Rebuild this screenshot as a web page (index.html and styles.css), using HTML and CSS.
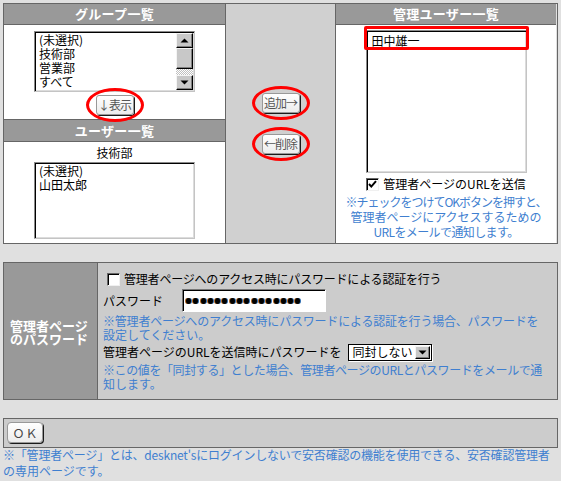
FILE: index.html
```html
<!DOCTYPE html>
<html lang="ja">
<head>
<meta charset="utf-8">
<title>管理ユーザー設定</title>
<link rel="stylesheet" href="styles.css">
</head>
<body>
<div class="top">
  <div class="col-left">
    <div class="hdr">グループ一覧</div>
    <div class="pane group-pane">
      <div class="listbox group-list">
        <div class="items">
          <div>(未選択)</div>
          <div>技術部</div>
          <div>営業部</div>
          <div>すべて</div>
        </div>
        <div class="scrollbar">
          <div class="sb-btn"><svg width="9" height="5" viewBox="0 0 9 5"><polygon points="0.5,4.5 4.5,0.5 8.5,4.5" fill="#000"/></svg></div>
          <div class="sb-thumb"></div>
          <div class="sb-track"></div>
          <div class="sb-btn"><svg width="9" height="5" viewBox="0 0 9 5"><polygon points="0.5,0.5 4.5,4.5 8.5,0.5" fill="#000"/></svg></div>
        </div>
      </div>
      <div class="btn-wrap"><span class="btn">↓表示</span><span class="ring"></span></div>
    </div>
    <div class="hdr hdr2">ユーザー一覧</div>
    <div class="pane user-pane">
      <div class="dept">技術部</div>
      <div class="listbox user-list">
        <div class="items">
          <div>(未選択)</div>
          <div>山田太郎</div>
        </div>
      </div>
    </div>
  </div>
  <div class="col-mid">
    <div class="btn-wrap"><span class="btn">追加→</span><span class="ring"></span></div>
    <div class="btn-wrap"><span class="btn">←削除</span><span class="ring"></span></div>
  </div>
  <div class="col-right">
    <div class="hdr">管理ユーザー一覧</div>
    <div class="pane admin-pane">
      <div class="listbox admin-list">
        <div class="items">
          <div>田中雄一</div>
        </div>
        <span class="rect"></span>
      </div>
      <div class="chk-row"><span class="chk"><svg width="11" height="11" viewBox="0 0 11 11"><path d="M2 5 L4.3 7.6 L9 2.2" fill="none" stroke="#000" stroke-width="2"/></svg></span><span>管理者ページのURLを送信</span></div>
      <div class="note center">
        <div class="ls-a">※チェックをつけてOKボタンを押すと、</div>
        <div>管理者ページにアクセスするための</div>
        <div class="ls-b">URLをメールで通知します。</div>
      </div>
    </div>
  </div>
</div>

<div class="pw">
  <div class="pw-label">管理者ページ<br>のパスワード</div>
  <div class="pw-body">
    <div class="row1"><span class="chk"></span><span class="ls-c">管理者ページへのアクセス時にパスワードによる認証を行う</span></div>
    <div class="row2"><span class="pw-name">パスワード</span><span class="pw-input"><i></i><i></i><i></i><i></i><i></i><i></i><i></i><i></i><i></i><i></i><i></i><i></i><i></i><i></i><i></i><i></i></span></div>
    <div class="note note-pw">
      <div class="ls-c">※管理者ページへのアクセス時にパスワードによる認証を行う場合、パスワードを</div>
      <div>設定してください。</div>
    </div>
    <div class="row5"><span>管理者ページのURLを送信時にパスワードを</span><span class="select"><span class="sel-text">同封しない</span><span class="sel-btn"><svg width="9" height="5" viewBox="0 0 9 5"><polygon points="0.5,0.5 4.5,4.5 8.5,0.5" fill="#000"/></svg></span></span></div>
    <div class="note note-pw">
      <div class="ls-d">※この値を「同封する」とした場合、管理者ページのURLとパスワードをメールで通</div>
      <div>知します。</div>
    </div>
  </div>
</div>

<div class="okbar"><span class="btn okbtn">ＯＫ</span></div>
<div class="foot">
  <div class="ls-e">※「管理者ページ」とは、desknet'sにログインしないで安否確認の機能を使用できる、安否確認管理者</div>
  <div>の専用ページです。</div>
</div>
</body>
</html>
```

FILE: styles.css
```css
body {
  margin: 3px;
  background: #e0e0e0;
  font-family: "Noto Sans CJK JP", "Noto Sans", sans-serif;
  font-size: 12px;
  color: #000;
  line-height: 14px;
}

.top {
  display: flex;
  border: 1px solid #666;
  height: 239px;
}

.col-left {
  width: 221px;
  border-right: 1px solid #666;
  display: flex;
  flex-direction: column;
}

.col-mid {
  width: 110px;
  border-right: 1px solid #666;
  background: #d0d0d0;
  display: flex;
  flex-direction: column;
  align-items: center;
  padding-top: 89px;
  gap: 21px;
  box-sizing: border-box;
}

.col-right {
  width: 220px;
  display: flex;
  flex-direction: column;
}

.hdr {
  height: 20px;
  line-height: 20px;
  background: #999;
  color: #fff;
  font-weight: bold;
  font-size: 13px;
  text-align: center;
  border-bottom: 1px solid #666;
  letter-spacing: 0.3px;
}

.hdr2 {
  height: 21px;
  line-height: 21px;
  border-top: 1px solid #666;
}

.pane {
  background: #fff;
  display: flex;
  flex-direction: column;
  align-items: center;
}

.group-pane {
  height: 94px;
  padding-top: 6px;
  box-sizing: border-box;
  gap: 3px;
}

.user-pane {
  flex: 1;
  padding-top: 4px;
}

.admin-pane {
  flex: 1;
  padding-top: 5px;
}

.listbox {
  position: relative;
  width: 161px;
  box-sizing: border-box;
  background: #fff;
  border: 1px solid;
  border-color: #8a8a8a #c4c4c4 #c4c4c4 #8a8a8a;
  box-shadow: inset 1px 1px 0 #000, inset -1px -1px 0 #dcdcdc;
  padding: 1px;
  display: flex;
}

.items {
  flex: 1;
  padding-left: 3px;
  line-height: 14px;
  white-space: nowrap;
}

.group-list { height: 61px; }
.user-list { height: 77px; margin-top: 1px; }
.admin-list { height: 143px; }
.admin-list .items { padding-top: 2px; padding-left: 4px; }

.scrollbar {
  width: 17px;
  display: flex;
  flex-direction: column;
}

.sb-btn {
  height: 15px;
  box-sizing: border-box;
  background: #c8c8c8;
  border: 1px solid;
  border-color: #f4f4f4 #000 #000 #f4f4f4;
  box-shadow: inset -1px -1px 0 #808080;
  display: flex;
  align-items: center;
  justify-content: center;
}

.sb-thumb {
  height: 21px;
  box-sizing: border-box;
  background: #c8c8c8;
  border: 1px solid;
  border-color: #f4f4f4 #000 #000 #f4f4f4;
  box-shadow: inset -1px -1px 0 #808080;
}

.sb-track {
  flex: 1;
  background: repeating-conic-gradient(#fff 0 25%, #c0c0c0 0 50%) 0 0 / 2px 2px;
}

.dept {
  line-height: 14px;
  height: 15px;
}

.btn-wrap {
  position: relative;
  display: inline-flex;
}

.btn {
  display: inline-flex;
  align-items: center;
  justify-content: center;
  width: 38px;
  height: 20px;
  box-sizing: border-box;
  border: 1px solid #999;
  border-radius: 3px;
  background: linear-gradient(#ffffff, #ececec);
  box-shadow: 1px 1px 0 #1a1a1a;
  color: #555;
  font-size: 12px;
  letter-spacing: -1px;
  white-space: nowrap;
}

.ring {
  position: absolute;
  left: -10px;
  top: -7px;
  width: 58px;
  height: 34px;
  box-sizing: border-box;
  border: 3px solid #f00;
  border-radius: 50%;
}

.rect {
  position: absolute;
  left: -3px;
  right: -3px;
  top: -5px;
  height: 24px;
  box-sizing: border-box;
  border: 3px solid #f00;
  border-radius: 2px;
}

.chk-row {
  display: flex;
  align-items: center;
  height: 16px;
  margin-top: 3px;
  white-space: nowrap;
}

.chk {
  display: inline-flex;
  align-items: center;
  justify-content: center;
  width: 13px;
  height: 13px;
  box-sizing: border-box;
  background: #fff;
  border: 1px solid;
  border-color: #666 #f0f0f0 #f0f0f0 #666;
  box-shadow: inset 1px 1px 0 #000;
  margin-right: 4px;
  flex: none;
}

.note {
  color: #3f7fd0;
  white-space: nowrap;
}

.center {
  text-align: center;
  line-height: 15px;
  margin-top: 2px;
}

.ls-a { letter-spacing: -1px; }
.ls-b { letter-spacing: -0.6px; }
.ls-c { letter-spacing: -0.2px; }
.ls-d { letter-spacing: -0.4px; }
.ls-e { letter-spacing: -0.2px; }

.pw {
  margin-top: 18px;
  display: flex;
  border: 1px solid #666;
  height: 136px;
}

.pw-label {
  width: 94px;
  flex: none;
  background: #999;
  border-right: 1px solid #666;
  color: #fff;
  font-weight: bold;
  font-size: 13px;
  line-height: 13px;
  display: flex;
  align-items: center;
  padding-left: 6px;
  box-sizing: border-box;
  padding-top: 2px;
}

.pw-body {
  flex: 1;
  background: #ccc;
  padding: 8px 0 0 5px;
  white-space: nowrap;
}

.row1 {
  display: flex;
  align-items: center;
  height: 16px;
}

.row1 .chk { margin-left: 4px; }

.row2 {
  display: flex;
  align-items: center;
  height: 23px;
  margin-top: 2px;
}

.pw-name {
  width: 79px;
}

.pw-input {
  width: 144px;
  height: 23px;
  box-sizing: border-box;
  background: #fff;
  border: 1px solid;
  border-color: #777 #fff #fff #777;
  box-shadow: inset 1px 1px 0 #000;
  display: flex;
  align-items: center;
  padding-left: 3px;
  gap: 2.3px;
}

.pw-input i {
  width: 5px;
  height: 6px;
  border-radius: 50%;
  background: #000;
  box-shadow: -1px 0 0 #b0621c, 1px 0 0 #2c6cb0;
}

.note-pw {
  line-height: 14px;
  margin-top: 2px;
}

.row5 {
  display: flex;
  align-items: center;
  height: 18px;
  margin-top: 1px;
}

.select {
  margin-left: 6px;
  width: 84px;
  height: 17px;
  box-sizing: border-box;
  background: #fff;
  border: 1px solid #000;
  box-shadow: 1px 1px 0 #fff;
  display: flex;
  align-items: center;
  justify-content: space-between;
  padding: 0 1px 0 4px;
}

.sel-btn {
  width: 15px;
  height: 13px;
  box-sizing: border-box;
  background: #c8c8c8;
  border: 1px solid;
  border-color: #f4f4f4 #000 #000 #f4f4f4;
  box-shadow: inset -1px -1px 0 #808080;
  display: flex;
  align-items: center;
  justify-content: center;
}

.okbar {
  margin-top: 18px;
  border: 1px solid #666;
  background: #ccc;
  height: 25px;
  padding: 3px 0 0 3px;
}

.okbar .okbtn {
  width: 36px;
  height: 21px;
  border-radius: 4px;
  color: #444;
  letter-spacing: 1px;
  font-size: 12px;
  padding-left: 1px;
}

.foot {
  color: #3f7fd0;
  white-space: nowrap;
  line-height: 16px;
  margin-top: -1px;
}
```
